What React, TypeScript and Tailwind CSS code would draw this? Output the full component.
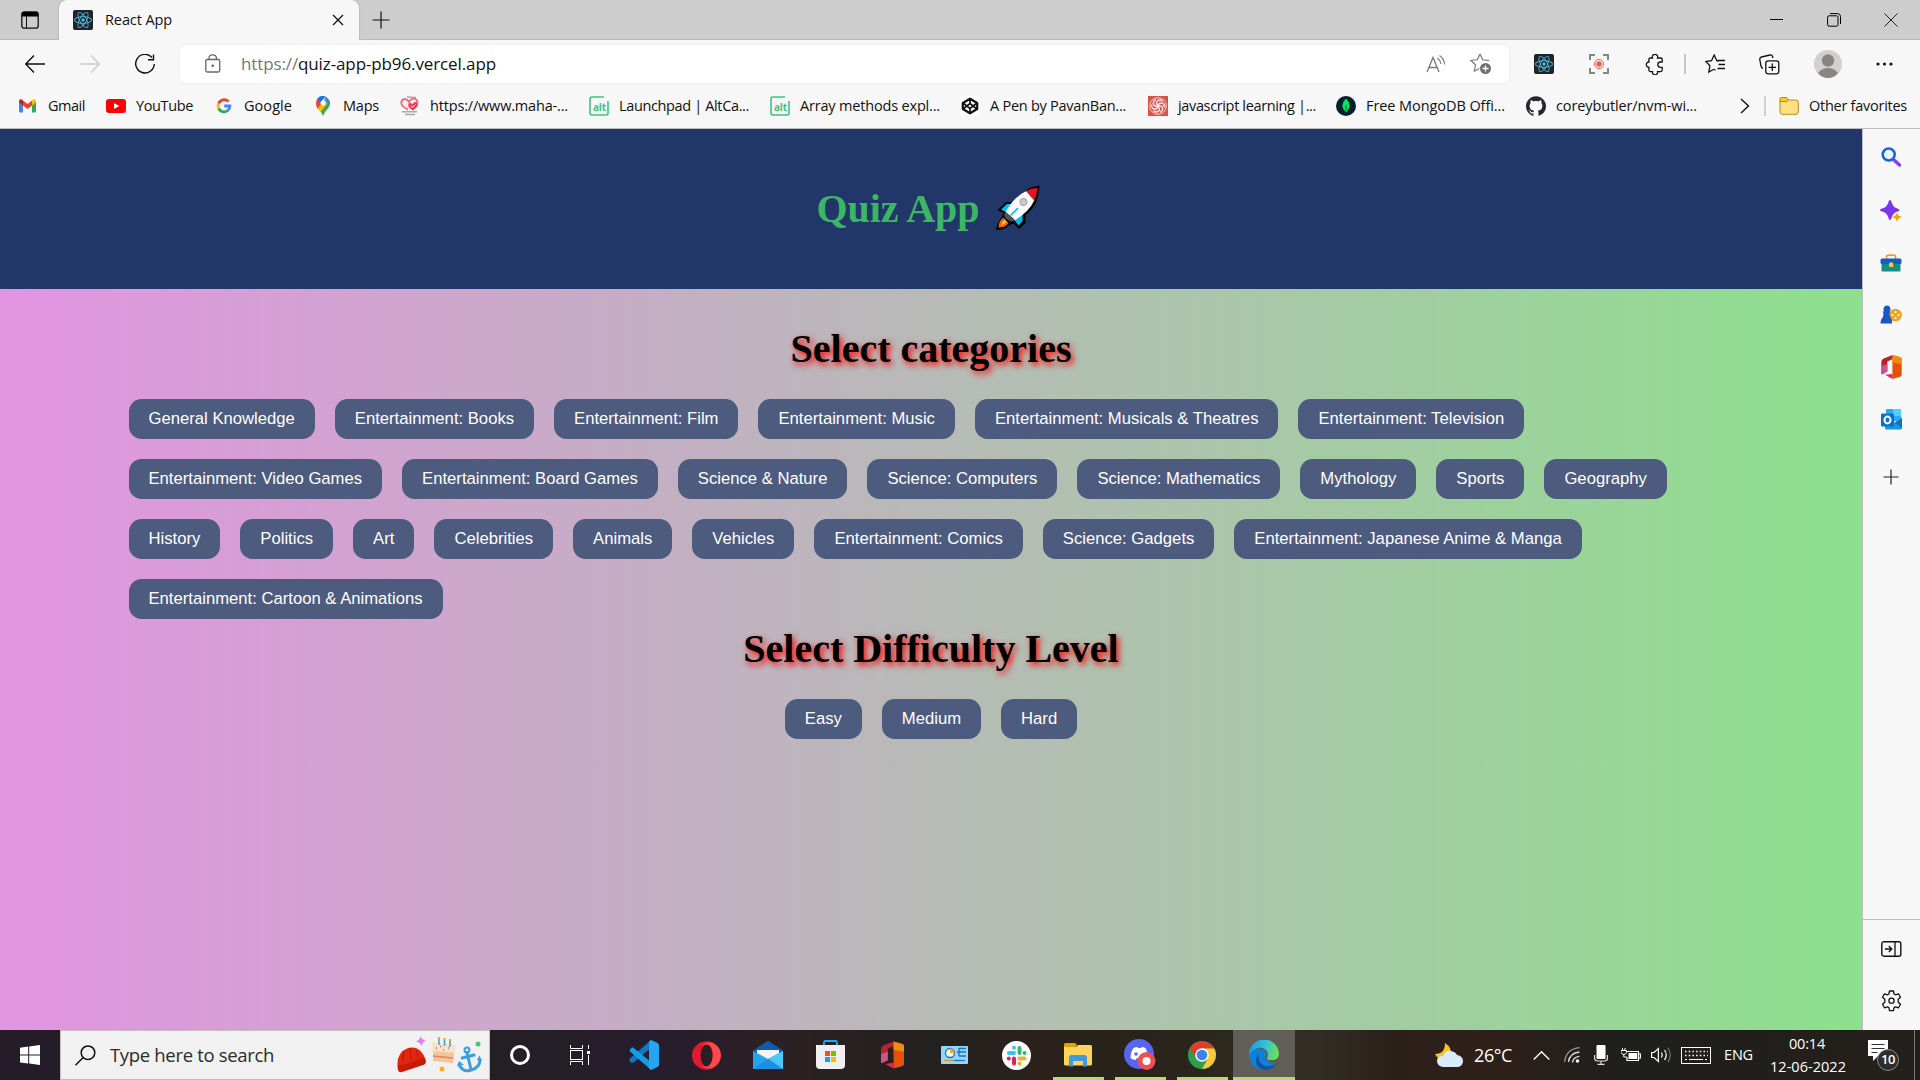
import { useLayoutEffect, useRef, useState, type ReactNode } from "react";
import { SiReact, SiGithub } from "react-icons/si";

/* Single line label whose tracking is tuned so that it fills `w` pixels. */
function Label({ w, className = "", children }: { w: number; className?: string; children: string }) {
  const ref = useRef<HTMLSpanElement>(null);
  const [spacing, setSpacing] = useState(0);
  useLayoutEffect(() => {
    if (ref.current) setSpacing((w - ref.current.getBoundingClientRect().width) / children.length);
  }, []);
  return (
    <span ref={ref} className={"inline-block shrink-0 whitespace-pre " + className} style={{ letterSpacing: spacing }}>
      {children}
    </span>
  );
}

function Svg({ w, h, className = "", children }: { w: number; h: number; className?: string; children: ReactNode }) {
  return (
    <svg width={w} height={h} viewBox={`0 0 ${w} ${h}`} fill="none" className={"block shrink-0 " + className}>
      {children}
    </svg>
  );
}

function ReactTile() {
  return (
    <span className="flex size-5 shrink-0 items-center justify-center rounded-[2px] bg-[#20232a]">
      <SiReact className="size-[18px] text-[#53bfe0]" />
    </span>
  );
}

/* ---------- bookmark icons ---------- */
const GmailIcon = () => (
  <Svg w={20} h={20}>
    <path d="M1 5v10.500q0 1 1 1h3V9z" fill="#4285f4" />
    <path d="M14 9v7.500h3q1 0 1-1V5z" fill="#34a853" />
    <path d="M5 9.500v-5l4.500 3.500L14 4.500v5L9.500 13z" fill="#ea4335" />
    <path d="M1 5.500q.3-3 3-1.900L5 4.500v5L1 6.500z" fill="#c5221f" />
    <path d="M18 5.500q-.3-3-3-1.900l-1 .900v5l4-3z" fill="#fbbc04" />
  </Svg>
);
const YouTubeIcon = () => (
  <Svg w={20} h={20}>
    <rect y="3" width="20" height="14" rx="3" fill="#f00" />
    <path d="M8 7l5.300 3L8 13z" fill="#fff" />
  </Svg>
);
const GoogleIcon = () => (
  <Svg w={20} h={20}>
    <path d="M14.500 5.600A6 6 0 0 0 4.600 7.500" stroke="#ea4335" strokeWidth="2.800" />
    <path d="M4.600 7.300a6 6 0 0 0 0 5.400" stroke="#fbbc05" strokeWidth="2.800" />
    <path d="M4.600 12.500a6 6 0 0 0 9.100 2" stroke="#34a853" strokeWidth="2.800" />
    <path d="M10.200 10h5.700q0 3-2.300 4.700" stroke="#4285f4" strokeWidth="2.800" />
  </Svg>
);
const MapsIcon = () => (
  <Svg w={20} h={20}>
    <path d="M3 7a7 7 0 0 1 2-5l5 5-5.500 6Q3 10 3 7z" fill="#ea4335" />
    <path d="M4.500 2.500A7 7 0 0 1 12.500.500L7 7z" fill="#1a73e8" />
    <path d="M12 .400q3 .900 4.500 4L10 12z" fill="#4285f4" />
    <path d="M16.300 4q2 4-1 8-4 4-5.300 8-1-2.500-2.500-4.500z" fill="#34a853" />
    <path d="M4.300 12.500 12 4l2 4-6.500 8z" fill="#fbbc04" />
    <circle cx="10" cy="7" r="2.500" fill="#fff" />
  </Svg>
);
const HeartsIcon = () => (
  <Svg w={20} h={20}>
    <path d="M8 13.500Q1.500 10.500 1.200 7q.300-4 4-3.800Q8 3.500 9 6q1.500-3.500 5-3.500 4 1 3.500 4.500" stroke="#ec6079" strokeWidth="1.700" fill="#fbe9ec" />
    <path d="M13 14.500q-6-3.500-4.500-6.500 2-2 4 .500Q14 5 17.500 6.500q2 3.500-4.500 8z" fill="#e23d5b" />
    <path d="M11 9.500l1.500 2 3-3" stroke="#fff" strokeWidth="1" />
    <path d="M7 1l9 .500M2 15.800h15M5 18.500h10" stroke="#aaa" strokeWidth="1.500" />
  </Svg>
);
const AltIcon = () => (
  <span className="relative flex size-5 shrink-0 items-center justify-center">
    <svg width="20" height="20" viewBox="0 0 20 20" fill="none" className="absolute inset-0">
      <path d="M15 1H3Q1 1 1 3v14q0 2 2 2h14q2 0 2-2V5" stroke="#3fc380" strokeWidth="1.600" />
    </svg>
    <span className="mt-px ml-px font-['Noto_Sans'] text-[10px] leading-none font-bold tracking-[-0.1px] text-[#3fc380]">alt</span>
  </span>
);
const CodePenIcon = () => (
  <Svg w={20} h={20} className="bg-white">
    <path d="M10 2.700l7.200 4.300v6L10 17.300 2.800 13V7z" stroke="#111" strokeWidth="2.200" strokeLinejoin="round" />
    <path d="M10 3v4.500M10 12.500V17M3 7l7 5.500L17 7M3 13l7-5.500 7 5.500" stroke="#111" strokeWidth="1.700" />
  </Svg>
);
const SwirlIcon = () => (
  <Svg w={20} h={20}>
    <rect width="20" height="20" fill="#d9534a" />
    <circle cx="10" cy="10" r="8.300" stroke="#f5d5d2" strokeWidth="1" />
    {[0, 60, 120, 180, 240, 300].map((a) => (
      <path key={a} transform={`rotate(${a} 10 10)`} d="M10 10q-3-3 0-5.500 2-1 4.500.500" stroke="#f9e4e2" strokeWidth="1.500" />
    ))}
  </Svg>
);
const MongoIcon = () => (
  <Svg w={20} h={20}>
    <circle cx="10" cy="10" r="10" fill="#05202c" />
    <path d="M10 2.500q7 7 0 14-7-7 0-14z" fill="#00ed64" />
    <path d="M10 8q1.500 4 0 6.500V17q-1.500-4 0-9z" fill="#05602c" />
  </Svg>
);
const FolderIcon = () => (
  <Svg w={20} h={20}>
    <path d="M1 3.500Q1 1.500 3 1.500h4.500l2 2.500H17q2.300 0 2.300 2.300V16q0 2.300-2.300 2.300H3Q1 18.300 1 16z" fill="#ffdf85" stroke="#bf8c10" />
    <path d="M1 3.500Q1 1.500 3 1.500h4.500L9.300 4 8 5.500H1z" fill="#ffc928" stroke="#bf8c10" />
  </Svg>
);

const bookmarks: { text: string; w: number; cell: string; icon: ReactNode }[] = [
  { text: "Gmail", w: 37, cell: "w-[88px]", icon: <GmailIcon /> },
  { text: "YouTube", w: 57, cell: "w-[108px]", icon: <YouTubeIcon /> },
  { text: "Google", w: 48, cell: "w-[99px]", icon: <GoogleIcon /> },
  { text: "Maps", w: 36, cell: "w-[87px]", icon: <MapsIcon /> },
  { text: "https://www.maha-...", w: 138, cell: "w-[189px]", icon: <HeartsIcon /> },
  { text: "Launchpad | AltCa...", w: 130, cell: "w-[181px]", icon: <AltIcon /> },
  { text: "Array methods expl...", w: 140, cell: "w-[190px]", icon: <AltIcon /> },
  { text: "A Pen by PavanBan...", w: 136, cell: "w-[188px]", icon: <CodePenIcon /> },
  { text: "javascript learning |...", w: 138, cell: "w-[188px]", icon: <SwirlIcon /> },
  { text: "Free MongoDB Offi...", w: 139, cell: "w-[190px]", icon: <MongoIcon /> },
  { text: "coreybutler/nvm-wi...", w: 141, cell: "w-[188px]", icon: <SiGithub className="size-5 shrink-0 text-[#24292f]" /> },
];

function TabStrip() {
  return (
    <div className="flex h-10 border-b border-[#b9b9b9] bg-[#cdcdcd]">
      <div className="flex w-[59px] items-center justify-center">
        <Svg w={18} h={18}>
          <rect x=".8" y=".8" width="16.400" height="16.400" rx="2.500" stroke="#111" strokeWidth="1.300" />
          <path d="M1 3q0-2 2-2h12q2 0 2 2v2.500H1z" fill="#000" />
          <path d="M5.500 5v12" stroke="#111" />
        </Svg>
      </div>
      <div className="flex h-10 w-[300px] items-center rounded-t-lg bg-[#f7f7f7] pr-[15px] pl-[14px] shadow-[0_0_2px_#999]">
        <ReactTile />
        <Label w={67} className="ml-[12px] text-[14.500px] text-[#111]">React App</Label>
        <Svg w={12} h={12} className="ml-auto">
          <path d="M1 1l10 10M11 1L1 11" stroke="#111" strokeWidth="1.300" />
        </Svg>
      </div>
      <div className="flex w-[43px] items-center justify-center">
        <Svg w={18} h={18}>
          <path d="M9 .500v17M.500 9h17" stroke="#111" strokeWidth="1.200" />
        </Svg>
      </div>
      <div className="mr-px ml-auto flex items-center">
        <div className="flex w-[57px] justify-center">
          <div className="h-px w-[13px] bg-black" />
        </div>
        <div className="flex w-[57px] justify-center">
          <Svg w={14} h={14}>
            <rect x=".6" y="2.800" width="10.400" height="10.400" rx="1.500" stroke="#000" />
            <path d="M3 .600h7.500q3 0 3 3V11" stroke="#000" />
          </Svg>
        </div>
        <div className="flex w-[57px] justify-center">
          <Svg w={14} h={14}>
            <path d="M.5.500l13 13M13.500.500l-13 13" stroke="#222" />
          </Svg>
        </div>
      </div>
    </div>
  );
}

function Toolbar() {
  return (
    <div className="flex h-[48px] items-center bg-[#f7f7f7]">
      <div className="flex w-[180px] items-center pl-[25px]">
        <Svg w={20} h={18}>
          <path d="M20 9H1M9 .500L.800 9 9 17.500" stroke="#111" strokeWidth="1.400" />
        </Svg>
        <Svg w={20} h={18} className="ml-[35px]">
          <path d="M0 9h19M11 .500L19.200 9 11 17.500" stroke="#ccc" strokeWidth="1.400" />
        </Svg>
        <Svg w={20} h={20} className="ml-[35px]">
          <path d="M17 3.500A9.300 9.300 0 1 0 19.300 10" stroke="#111" strokeWidth="1.400" />
          <path d="M18.500.500v5.200h-5.500" stroke="#111" strokeWidth="1.400" />
        </Svg>
      </div>
      <div className="mt-[-1px] flex h-[38px] w-[1329px] items-center rounded-[5px] bg-white pl-[25px] shadow-[0_0_3px_#e4e4e4]">
        <Svg w={16} h={19}>
          <rect x=".8" y="5.500" width="13.900" height="12.500" rx="1.500" stroke="#666" strokeWidth="1.300" />
          <path d="M4 5.500V4q0-3.200 3.700-3.200T11.400 4v1.500" stroke="#666" strokeWidth="1.300" />
          <circle cx="7.700" cy="11.800" r="1.200" fill="#555" />
        </Svg>
        <Label w={57} className="ml-[20px] text-[17px] text-[#767676]">https://</Label>
        <Label w={198} className="text-[17px] text-[#111]">quiz-app-pb96.vercel.app</Label>
        <Svg w={20} h={18} className="ml-auto">
          <path d="M1 17L7 2.500 13 17M3 12.500h8" stroke="#777" strokeWidth="1.300" />
          <path d="M11.500 3q3 2.300 3.500 6M13.500.500q4.500 2.800 5.200 9" stroke="#777" strokeWidth="1.100" />
        </Svg>
        <Svg w={22} h={22} className="mr-[17px] ml-[24px]">
          <path d="M10 1l2.700 5.800 6.400.800M10 1L7.300 6.800.900 7.500l4.600 4.300-1.200 6.400 5-2.800" stroke="#777" strokeWidth="1.200" />
          <circle cx="15.500" cy="15.500" r="5.500" fill="#707070" />
          <path d="M15.500 12.500v6M12.500 15.500h6" stroke="#fff" strokeWidth="1.300" />
        </Svg>
      </div>
      <div className="flex flex-1 items-center pl-[25px]">
        <ReactTile />
        <Svg w={20} h={20} className="ml-[35px]">
          <path d="M1 6V1h5M14 1h5v5M19 14v5h-5M6 19H1v-5" stroke="#858585" strokeWidth="2" />
          <circle cx="10" cy="10" r="4.500" stroke="#f2594b" />
          <circle cx="10" cy="10" r="2.700" fill="#f2594b" />
        </Svg>
        <Svg w={19} h={21} className="ml-[36px]">
          <path d="M5.300 4h2.200a2.700 2.700 0 1 1 5 0h3.300q1.400 0 1.400 1.400V8h-1.700a2.600 2.600 0 0 0 0 5.300h1.700v2.800q0 1.500-1.400 1.500h-3.300a2.600 2.600 0 1 1-5 0H5.300q-1.400 0-1.400-1.500v-2.900a2.600 2.600 0 1 1 0-5.200V5.400Q3.900 4 5.300 4z" stroke="#111" strokeWidth="1.300" />
        </Svg>
        <div className="ml-[20px] h-5 w-[2px] bg-[#c6c6c6]" />
        <Svg w={21} h={20} className="ml-[19px]">
          <path d="M13.500 7l-1.700-.300L9.200 1 6.500 6.700.800 7.500l4.100 4.300-1.100 6.300 5-2.800" stroke="#111" strokeWidth="1.300" />
          <path d="M8.800 15.300l1.700 1M12.500 6.500h7.500M13.500 10.500H20M12.500 14.500H20" stroke="#111" strokeWidth="1.300" />
        </Svg>
        <Svg w={21} h={21} className="ml-[33px]">
          <rect x="6.800" y="6.800" width="13" height="13" rx="2.500" stroke="#111" strokeWidth="1.300" />
          <path d="M13.300 9.500v7.500M9.500 13.300H17" stroke="#111" strokeWidth="1.300" />
          <path d="M4 14.500q-1.500-.500-2-2.500L.800 5.500q-.300-2 1.700-2.500L11 1q2-.300 2.600 1.500L14 4" stroke="#111" strokeWidth="1.300" />
        </Svg>
        <Svg w={28} h={28} className="ml-[34px]">
          <circle cx="14" cy="14" r="14" fill="#d2d0ce" />
          <circle cx="14" cy="10.500" r="6.200" fill="#8a8583" />
          <path d="M4 23q4-5 10-5t10 5q-4 5-10 5T4 23z" fill="#8a8583" />
        </Svg>
        <Svg w={17} h={4} className="ml-[34px]">
          <circle cx="2" cy="2" r="1.600" fill="#111" />
          <circle cx="8.500" cy="2" r="1.600" fill="#111" />
          <circle cx="15" cy="2" r="1.600" fill="#111" />
        </Svg>
      </div>
    </div>
  );
}

function BookmarkBar() {
  return (
    <div className="flex h-[41px] items-center border-b border-[#bdbdbd] bg-[#f7f7f7] pb-[4px] pl-[18px]">
      {bookmarks.map((b) => (
        <div key={b.text} className={"flex shrink-0 items-center gap-[10px] " + b.cell}>
          {b.icon}
          <Label w={b.w} className="text-[14.500px] text-[#111]">{b.text}</Label>
        </div>
      ))}
      <Svg w={10} h={16} className="ml-[26px]">
        <path d="M1 1l7.500 7L1 15" stroke="#111" strokeWidth="1.400" />
      </Svg>
      <div className="ml-[14px] h-5 w-[2px] bg-[#d0d0d0]" />
      <div className="ml-[13px] flex items-center gap-[10px]">
        <FolderIcon />
        <Label w={98} className="text-[14.500px] text-[#111]">Other favorites</Label>
      </div>
    </div>
  );
}

/* ---------- page ---------- */
const categories = [
  "General Knowledge", "Entertainment: Books", "Entertainment: Film", "Entertainment: Music",
  "Entertainment: Musicals & Theatres", "Entertainment: Television", "Entertainment: Video Games",
  "Entertainment: Board Games", "Science & Nature", "Science: Computers", "Science: Mathematics",
  "Mythology", "Sports", "Geography", "History", "Politics", "Art", "Celebrities", "Animals", "Vehicles",
  "Entertainment: Comics", "Science: Gadgets", "Entertainment: Japanese Anime & Manga",
  "Entertainment: Cartoon & Animations",
];

function Pill({ children }: { children: string }) {
  return (
    <button className="h-10 rounded-[12.500px] bg-[#4d5b7e] px-5 font-['Liberation_Sans',Arial,sans-serif] text-[16.667px] leading-[38px] whitespace-nowrap text-white">
      {children}
    </button>
  );
}

const Rocket = () => (
  <Svg w={46} h={46}>
    <path d="M44.500.800Q31 1.500 23 13l-3 4h-9L2.500 25l6 3-2 5Q2 37 1 45q9 0 12.500-4.500l5-2L24 44l6.500-6v-8q13-9 14-29z" fill="#000" />
    <path d="M8.500 32.500Q3.500 36 3.500 42.500q7 0 10-4.500z" fill="#f7630c" />
    <path d="M9.500 35q-3 2-3.300 5 3-.500 5.300-3z" fill="#ffc83d" />
    <path d="M6 24.500l6-5.500h7.500l-7 9zM18.500 34l9-7v9l-4 4.500z" fill="#00bcf2" />
    <path d="M10.500 27Q19 12 31 6q6 3 8.500 9Q34 27 20 35z" fill="#fff" />
    <path d="M11 27l9 9-4 .500q-6-2-7-7z" fill="#4a5459" />
    <path d="M31 6q5-3 11.500-3Q42 10 39 15.500z" fill="#e81224" />
    <circle cx="28.500" cy="17" r="4.200" fill="#b4b4b4" />
    <circle cx="28.500" cy="17" r="2.600" fill="#ccc" />
    <path d="M15.500 30.500l7.500-7.500" stroke="#00bcf2" strokeWidth="1.700" />
  </Svg>
);

function QuizPage() {
  return (
    <main className="flex w-[1862px] flex-col bg-[linear-gradient(90deg,#e294e1,#8de08d)]">
      <header className="flex h-40 items-center justify-center bg-[#213769] pr-[5px] font-['Liberation_Serif',serif]">
        <h1 className="flex items-center text-[40px] leading-[46px] font-bold text-[#3cb664]">
          <Label w={163}>Quiz App</Label>
          <span className="mb-[2px] ml-[15px]"><Rocket /></span>
        </h1>
      </header>
      <h2 className="mt-[37px] text-center font-['Liberation_Serif',serif] text-[40px] leading-[46px] font-bold text-black [text-shadow:2.500px_2.500px_6px_red]">
        Select categories
      </h2>
      <div className="mt-[27px] flex flex-wrap gap-5 px-[128.500px]">
        {categories.map((c) => (
          <Pill key={c}>{c}</Pill>
        ))}
      </div>
      <h2 className="mt-[7px] text-center font-['Liberation_Serif',serif] text-[40px] leading-[46px] font-bold text-black [text-shadow:2.500px_2.500px_6px_red]">
        Select Difficulty Level
      </h2>
      <div className="mt-[27px] flex justify-center gap-5">
        <Pill>Easy</Pill>
        <Pill>Medium</Pill>
        <Pill>Hard</Pill>
      </div>
    </main>
  );
}

/* ---------- shared product logos ---------- */
const OfficeLogo = ({ className = "" }: { className?: string }) => (
  <svg viewBox="0 0 22 26" fill="none" className={"block shrink-0 " + className}>
    <path d="M0 7.500Q0 5 2 4L12 0v4.500L6.500 7v11L.500 21Q0 20 0 19z" fill="#b8242c" />
    <path d="M0 12l6.500-2v8L.500 21Q0 20 0 19z" fill="#c8578f" />
    <path d="M12 0l8.500 2.500Q22 3 22 4.500v17q0 1.500-1.500 2L12 26z" fill="#e8500a" />
    <path d="M12 0l8.500 2.500Q22 3 22 4.500V10l-10-2z" fill="#f08a10" />
    <path d="M4 21.500l8-1V26z" fill="#e4284c" />
  </svg>
);

function Sidebar() {
  return (
    <aside className="flex w-[58px] flex-col items-center border-l border-[#bebec2] bg-[#f7f7f7] pr-px">
      <div className="flex h-[332px] flex-col items-center">
        <div className="flex h-[56px] items-center">
          <Svg w={20} h={20}>
            <path d="M13 13l5.500 5" stroke="#8a3ff0" strokeWidth="3.500" strokeLinecap="round" />
            <circle cx="7.700" cy="7.500" r="6" stroke="#1466d8" strokeWidth="2.500" fill="#e9f6ff" />
          </Svg>
        </div>
        <div className="flex h-[52px] items-center">
          <Svg w={22} h={22}>
            <path d="M10 0q1 0 1.500 2 1.500 5.500 6 6.500 2 .500 2 1.500t-2 1.500q-4.500 1-6 6.500-.500 2-1.500 2t-1.500-2q-1.500-5.500-6.500-6.500Q0 11 0 10t2-1.500Q7 7.500 8.500 2 9 0 10 0z" fill="#7c35e8" />
            <path d="M17 12.500l1.500 3 3.500 1.500-3.500 1.500-1.500 3-1.500-3L12 17l3.500-1.500z" fill="#f0a60a" />
          </Svg>
        </div>
        <div className="flex h-[52px] items-center">
          <Svg w={22} h={18}>
            <path d="M6.500 5V3q0-1.800 2-1.800h5q2 0 2 1.800v2" stroke="#e8a020" strokeWidth="1.700" />
            <rect x="1.500" y="8" width="19" height="9.500" rx="1" fill="#128e84" />
            <rect x=".5" y="4.500" width="21" height="5.500" rx="1.500" fill="#1659c8" />
            <rect x="9" y="8.500" width="4.300" height="4.500" rx="1" fill="#ffc43c" />
          </Svg>
        </div>
        <div className="flex h-[52px] items-center">
          <Svg w={22} h={20}>
            <circle cx="15.500" cy="10" r="6.300" fill="#eea21c" />
            <g fill="#fff3dc">
              <circle cx="15.500" cy="7" r="1.200" />
              <circle cx="15.500" cy="13" r="1.200" />
              <circle cx="12.500" cy="10" r="1.200" />
              <circle cx="18.500" cy="10" r="1.200" />
            </g>
            <path d="M3.500 4a3.500 3.500 0 1 1 6 2.500h1l-1 2q.300 4 2 5.500.800 2 .500 4.500H.500q0-3 1-4.500 2-1.500 2-5.500l-1-2h1.500Q3.500 5.500 3.500 4z" fill="#1d55c4" />
          </Svg>
        </div>
        <div className="flex h-[52px] items-center">
          <OfficeLogo className="h-[24px] w-[21px]" />
        </div>
        <div className="flex h-[52px] items-center pt-px">
          <Svg w={21} h={21}>
            <rect x="5" y="0" width="15" height="12" rx="1" fill="#2fa9ec" />
            <path d="M12 0h8v7h-8z" fill="#50d0ff" />
            <path d="M4 19V9l8.500 5L21 9v10q0 1.500-1.500 1.500h-14Q4 20.500 4 19z" fill="#1b95df" />
            <path d="M14 14l7-5v10z" fill="#1670b8" />
            <rect x="0" y="4.500" width="13" height="13" rx="1.300" fill="#0a70cc" />
            <ellipse cx="6.500" cy="11" rx="3" ry="3.400" stroke="#fff" strokeWidth="2" />
          </Svg>
        </div>
      </div>
      <Svg w={16} h={16} className="mt-[8px]">
        <path d="M8 .500v15M.500 8h15" stroke="#222" strokeWidth="1.200" />
      </Svg>
      <div className="mt-auto mr-[-1px] flex h-[111px] w-[57px] flex-col items-center border-t border-[#bdbdbd] pr-px">
        <Svg w={21} h={16} className="mt-[21px]">
          <rect x=".8" y=".8" width="19" height="14.400" rx="2" stroke="#111" strokeWidth="1.400" />
          <path d="M14 1v14M4 8h6.500M7.800 5l3 3-3 3" stroke="#111" strokeWidth="1.300" />
        </Svg>
        <Svg w={21} h={22} className="mt-[33px]">
          <path d="M8.500 1h4l.600 3 1.500.800 2.900-1 2 3.500-2.300 2v3l2.300 2-2 3.500-2.900-1-1.500.800-.600 3h-4l-.600-3-1.500-.800-2.900 1-2-3.500 2.300-2v-3l-2.300-2 2-3.500 2.900 1L7.900 4z" stroke="#111" strokeWidth="1.300" strokeLinejoin="round" />
          <circle cx="10.500" cy="10.800" r="2.600" stroke="#111" strokeWidth="1.300" />
        </Svg>
      </div>
    </aside>
  );
}

/* ---------- taskbar ---------- */
const VsCode = () => (
  <Svg w={30} h={30}>
    <path d="M22 0v8L4.500 22.500Q3 23.500 1.500 22L.500 20.500q-.800-1 .500-2z" fill="#1077be" />
    <path d="M1 11.500L.500 10 2.500 7.700q1-.700 2 0L22 22v8z" fill="#149ae6" />
    <path d="M22 0l6.500 3q1.500.800 1.500 2.500v19q0 1.700-1.500 2.500L22 30l-2-1.500V1.500z" fill="#27a4f2" />
  </Svg>
);
const Opera = () => (
  <Svg w={29} h={29}>
    <ellipse cx="14.500" cy="14.500" rx="14.500" ry="14.300" fill="#e21830" />
    <path d="M9 5Q20-4 28 9q3 11-6 17-7 4-13-2 10 4 12-9Q21 0 9 5z" fill="#fa4a4c" />
    <ellipse cx="14.500" cy="14.500" rx="6" ry="11" fill="#2a1f22" />
  </Svg>
);
const Mail = () => (
  <Svg w={30} h={28}>
    <path d="M0 9.500L13.500.500q1.500-1 3 0L30 9.500V14H0z" fill="#0d5cab" />
    <path d="M4 9h22v9H4z" fill="#f4f4f4" />
    <path d="M0 10l15 8 15-8v18H0z" fill="#23a4ec" />
    <path d="M30 10v18L15 18z" fill="#4cc8f8" />
    <path d="M0 28l15-10 15 10z" fill="#1c8fe0" />
  </Svg>
);
const Store = () => (
  <Svg w={29} h={30}>
    <path d="M8 7V2.500Q8 1 9.500 1h10Q21 1 21 2.500V7" stroke="#23a9ea" strokeWidth="1.800" />
    <path d="M0 5h29v20q0 4-4 4H4q-4 0-4-4z" fill="#f0f0f0" />
    <path d="M9 11h5v5H9z" fill="#f25022" />
    <path d="M15 11h5v5h-5z" fill="#7fba00" />
    <path d="M9 17h5v5H9z" fill="#00a4ef" />
    <path d="M15 17h5v5h-5z" fill="#ffb900" />
  </Svg>
);
const ControlPanel = () => (
  <Svg w={27} h={18}>
    <rect width="27" height="18" rx="1" fill="#8fd8fa" />
    <circle cx="9" cy="7" r="4.500" fill="#e9f6ff" stroke="#2474b8" strokeWidth="1.300" />
    <path d="M9 7V2.500A4.500 4.500 0 0 1 13.500 7z" fill="#f4a830" />
    <path d="M16 6h2V2.500h7M18 6h7M18 10h7M18 6v4" stroke="#1d72b8" strokeWidth="1.300" />
    <path d="M3 14.500h10" stroke="#e48a2a" strokeWidth="1.200" />
    <path d="M13 14.500h11" stroke="#1d72b8" strokeWidth="1.200" />
  </Svg>
);
const Slack = () => (
  <Svg w={29} h={29}>
    <circle cx="14.500" cy="14.500" r="14.500" fill="#fff" />
    <g strokeWidth="4" strokeLinecap="round">
      <path d="M7 12h5" stroke="#36c5f0" />
      <path d="M12 6.700v.100" stroke="#36c5f0" />
      <path d="M17.500 7v5" stroke="#2eb67d" />
      <path d="M22.500 12v.100" stroke="#2eb67d" />
      <path d="M17.500 17.500h5" stroke="#ecb22e" />
      <path d="M17.500 22.600v.100" stroke="#ecb22e" />
      <path d="M12 17.500v5" stroke="#e01e5a" />
      <path d="M6.800 17.500v.100" stroke="#e01e5a" />
    </g>
  </Svg>
);
const Explorer = () => (
  <Svg w={28} h={24}>
    <path d="M0 1.500Q0 0 1.500 0H11l2 2-2 3H0z" fill="#e3a008" />
    <path d="M0 4h12l2-2h12.500Q28 2 28 3.500V21q0 1.500-1.500 1.500h-25Q0 22.500 0 21z" fill="#ffd35c" />
    <path d="M5 23.500v-9q0-2.500 2.500-2.500h13q2.500 0 2.500 2.500v9h-4V18H9v5.500z" fill="#3f9ade" />
  </Svg>
);
const Discord = () => (
  <Svg w={32} h={32}>
    <circle cx="15" cy="15" r="15" fill="#5865f2" />
    <path d="M9.500 9q2-1 4-1l.500 1h3l.500-1q2 0 4 1 2.500 4 2.500 10-2.500 2-5 2l-1-1.700q-3 .700-5.500 0L11.500 21q-2.500 0-5-2 0-6 3-10z" fill="#fff" />
    <circle cx="12" cy="15" r="1.800" fill="#5865f2" />
    <circle cx="22.500" cy="22" r="9" fill="#ed5053" />
    <circle cx="22.500" cy="22" r="4" fill="#fff" />
  </Svg>
);
const Chrome = () => (
  <Svg w={28} h={28}>
    <circle cx="14" cy="14" r="14" fill="#2f9e4c" />
    <path d="M2 7A14 14 0 0 1 26.200 7.500H14L8 17z" fill="#e23b2e" />
    <path d="M14 7.500h12.300A14 14 0 0 1 14 28l5.700-10z" fill="#fcc934" />
    <circle cx="14" cy="14" r="6.800" fill="#fff" />
    <circle cx="14" cy="14" r="5.300" fill="#3b82ee" />
  </Svg>
);
const Edge = () => (
  <Svg w={30} h={30}>
    <defs>
      <linearGradient id="edge-top" x1="2" y1="8" x2="29" y2="14" gradientUnits="userSpaceOnUse">
        <stop stopColor="#1f9fe0" />
        <stop offset=".5" stopColor="#34c3d4" />
        <stop offset="1" stopColor="#6be44e" />
      </linearGradient>
    </defs>
    <path d="M0 15Q2 6 9 8.500 17 9 17 15q-2 2-1 4 4 5 11.500 4.500A15 15 0 0 1 0 15z" fill="#0f80da" />
    <path d="M10 14q-2 9 6 12 6 1 12-3-4 7-12 7-9-1-9-9 0-5 3-7z" fill="#12549e" />
    <path d="M0 15A15 15 0 0 1 30 14q-.500 6-7 6-6 0-5-2.500 1-1 1-3Q18 8 11 7.500 4 8 0 15z" fill="url(#edge-top)" />
  </Svg>
);

const tasks: { icon: ReactNode; running?: boolean; active?: boolean }[] = [
  { icon: <VsCode /> },
  { icon: <Opera /> },
  { icon: <Mail /> },
  { icon: <Store /> },
  { icon: <OfficeLogo className="h-[28px] w-[23px]" /> },
  { icon: <ControlPanel /> },
  { icon: <Slack /> },
  { icon: <Explorer />, running: true },
  { icon: <Discord />, running: true },
  { icon: <Chrome />, running: true },
  { icon: <Edge />, active: true },
];

const SearchArt = () => (
  <Svg w={88} h={38}>
    <path d="M2 34Q-1 17 12 12q13-3 18 13 0 3-3 4L6 36q-3 1-4-2z" fill="#e02710" />
    <path d="M2 29q12 0 25-8l2.500 3q1 3-2 4.500Q16 32 5 36q-4 0-3-7z" fill="#c91a06" />
    <path d="M8 15q-1 6-1 11M14 12q1 6 1 12M20 14q2 4 2 8" stroke="#b81505" />
    <path d="M24.500 0q.500 4 5.500 4-4 1.500-4 6-2-4-6-4.500 4-1.500 4.500-5.500z" fill="#de7df0" />
    <path d="M37 8l22 2-2 17-20-2z" fill="#f6c49c" />
    <path d="M36 6l24 3-1 8-23-2z" fill="#f8e3c4" />
    <path d="M37 20l20 2" stroke="#e0855c" strokeWidth="1.500" />
    <path d="M43 3v6M48.500 4v6M54 5v6" stroke="#3fa8dc" strokeWidth="1.600" />
    <path d="M43 1v2M48.500 2v2M54 3v2" stroke="#f4a323" strokeWidth="2.200" />
    <path d="M40 12h1M47 14h1M52 12h1M44 10.500h1" stroke="#c94d8a" strokeWidth="1.500" />
    <circle cx="46" cy="33" r="2.500" fill="#fcaf17" />
    <circle cx="82" cy="8" r="2.500" fill="#43cf6a" />
    <circle cx="71" cy="14" r="2.500" stroke="#3a9fe0" strokeWidth="2" />
    <path d="M71 16.500l4 17M66 22l12-3" stroke="#3a9fe0" strokeWidth="3" strokeLinecap="round" />
    <path d="M63 29q5 8 12 5 9-2 9-11" stroke="#3a9fe0" strokeWidth="3" />
    <path d="M61 30l2-5 5 4zM81 24l2.500-4.500L86 25z" fill="#3a9fe0" />
  </Svg>
);

function Taskbar() {
  return (
    <footer className="flex h-[50px] bg-[linear-gradient(90deg,#251c29_0,#231f23_500px,#261d2d_650px,#2c2023_780px,#232020_940px,#2a211b_1030px,#29251b_1180px,#322e25_1310px,#2c1f1a_1400px,#2f2019_1480px,#1f1f1d_1620px,#241f1b_1920px)]">
      <div className="flex w-[60px] items-center justify-center">
        <Svg w={20} h={20}>
          <path d="M0 2.800L8.200 1.600v8H0zM9.200 1.500L20 0v9.600H9.200zM0 10.600h8.200v8L0 17.400zM9.200 10.600H20V20L9.200 18.600z" fill="#fff" />
        </Svg>
      </div>
      <div className="flex w-[430px] items-center border border-[#c0c0c0] bg-[#f1f1f1] pl-[14px]">
        <Svg w={21} h={21}>
          <circle cx="13" cy="7.700" r="6.800" stroke="#111" strokeWidth="1.500" />
          <path d="M8.200 12.500L.500 20.300" stroke="#111" strokeWidth="1.500" />
        </Svg>
        <Label w={164} className="ml-[14px] text-[18.500px] text-[#2b2b2b]">Type here to search</Label>
        <span className="mr-[5px] ml-auto"><SearchArt /></span>
      </div>
      <div className="flex w-[60px] items-center justify-center">
        <div className="size-5 rounded-full border-[3px] border-white" />
      </div>
      <div className="mr-[3px] flex w-[60px] items-center justify-center">
        <Svg w={20} h={20}>
          <path d="M.5 0v3.500h12V0M.500 20v-3.500h12V20" stroke="#fff" />
          <rect x=".5" y="5.500" width="12" height="9" stroke="#fff" />
          <path d="M18.500 0v4M18.500 10v10" stroke="#fff" />
          <path d="M17 6h3v3h-3z" fill="#fff" />
        </Svg>
      </div>
      {tasks.map((t, i) => (
        <div key={i} className={"flex w-[62px] flex-col items-center " + (t.active ? "bg-[#605e57]" : "")}>
          <div className="flex h-[47px] items-center justify-center pt-[3px]">{t.icon}</div>
          {t.running && <div className="h-[3px] w-[51px] bg-[#aee062]" />}
          {t.active && <div className="h-[3px] w-full bg-[#aee062]" />}
        </div>
      ))}
      <div className="flex flex-1 items-center pl-[140px] text-white">
        <Svg w={28} h={25}>
          <path d="M10 0q8 5 5 13L4 15Q1 14 0 11q10 0 10-11z" fill="#f7c325" />
          <path d="M8 24q-6-1-6-6t6-5q2-6 8-5 5 1 6 4 6 1 6 6 0 5-5 6z" fill="#d8ebfa" />
        </Svg>
        <Label w={38} className="ml-[11px] text-[18px]">26°C</Label>
        <Svg w={17} h={9} className="ml-[21px]">
          <path d="M.700 8.500L8.500.800l7.800 7.700" stroke="#fff" strokeWidth="1.400" />
        </Svg>
        <Svg w={16} h={16} className="ml-[14px]">
          <path d="M.600 15Q2 2 15.500.700" stroke="#999" strokeWidth="1.200" />
          <path d="M4.500 15Q5.500 6 15.500 5M8.500 15.500Q9 10 15.500 9.300" stroke="#ddd" strokeWidth="1.300" />
          <circle cx="13.500" cy="14" r="1.800" fill="#fff" />
        </Svg>
        <Svg w={14} h={20} className="ml-[14px]">
          <rect x="2.500" y="0" width="9" height="14" rx="1" fill="#fff" />
          <path d="M.600 10v3q0 3 3 3h6.800q3 0 3-3v-3M7 16v3.500M3.500 19.400h7" stroke="#ddd" strokeWidth="1.200" />
        </Svg>
        <Svg w={20} h={14} className="ml-[13px]">
          <path d="M6 3.500h11.500v9H6V9M18 6h1.500v4H18" stroke="#fff" strokeWidth="1.200" />
          <path d="M7.500 5h8.700v6H7.500z" fill="#fff" />
          <path d="M1.500 0v2M4 0v2M0 2.500h5.500v2q-1 2-2.700 2T0 4.500zM2.800 6v3h3" stroke="#fff" />
        </Svg>
        <Svg w={21} h={16} className="ml-[10px]">
          <path d="M.600 5.500H3L7.400 1.500v13L3 10.500H.600z" stroke="#fff" strokeWidth="1.200" />
          <path d="M10.500 5.500q1.500 2.500 0 5M13.500 3q3.500 5 0 10" stroke="#fff" strokeWidth="1.200" />
          <path d="M16.800.800q5 7.200 0 14.400" stroke="#777" strokeWidth="1.100" />
        </Svg>
        <Svg w={30} h={17} className="ml-[9px]">
          <rect x=".5" y=".5" width="29" height="16" stroke="#fff" />
          <path d="M4 4.500h23M4 8.500h23" stroke="#fff" strokeWidth="1.500" strokeDasharray="1.500 2.200" />
          <path d="M4 12.500h2M8 12.500h14M24 12.500h2" stroke="#fff" strokeWidth="1.200" />
        </Svg>
        <Label w={29} className="ml-[13px] text-[14.500px]">ENG</Label>
        <div className="ml-[17px] flex w-[76px] flex-col items-center text-[14.500px] leading-[23px]">
          <Label w={36} className="mr-[2px]">00:14</Label>
          <Label w={76}>12-06-2022</Label>
        </div>
        <div className="relative ml-[22px] h-[30px] w-[31px]">
          <Svg w={20} h={22}>
            <path d="M0 0h20v16H10l-5 5v-5H0z" fill="#fff" />
            <path d="M3.500 4.500h13M3.500 8.500h13M3.500 12.500h6" stroke="#333" strokeWidth="1.200" />
          </Svg>
          <div className="absolute top-[9px] left-[9px] flex size-[22px] items-center justify-center rounded-full border border-[#8a8a8a] bg-[#2d2d2d] text-[13px] font-semibold tracking-[-0.5px]">
            10
          </div>
        </div>
        <div className="mr-[5px] ml-auto h-full w-px bg-[#777]" />
      </div>
    </footer>
  );
}

export default function App() {
  return (
    <div className="flex h-[1080px] w-[1920px] flex-col overflow-hidden font-['Open_Sans','Noto_Sans',sans-serif]">
      <TabStrip />
      <Toolbar />
      <BookmarkBar />
      <div className="flex h-[901px]">
        <QuizPage />
        <Sidebar />
      </div>
      <Taskbar />
    </div>
  );
}
